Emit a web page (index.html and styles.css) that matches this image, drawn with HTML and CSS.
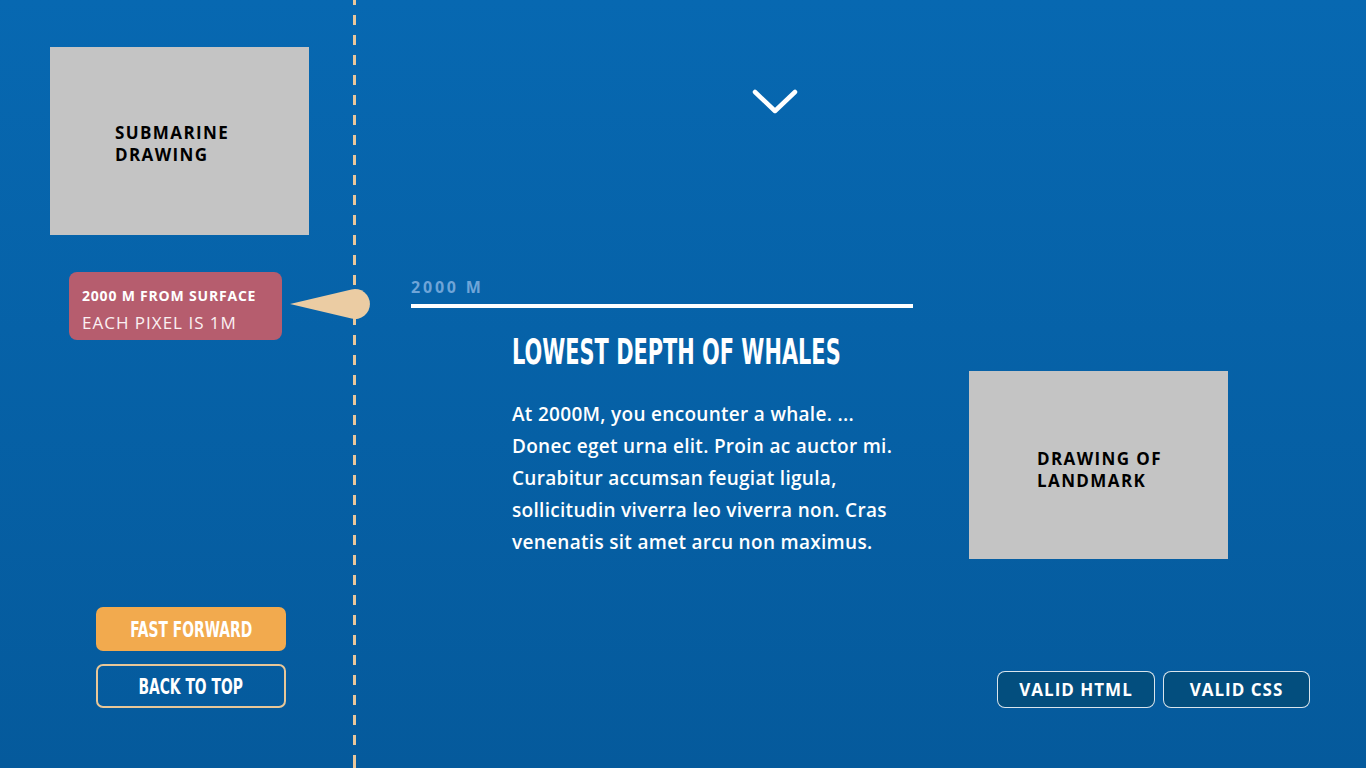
FILE: index.html
```html
<!DOCTYPE html>
<html lang="en">
<head>
<meta charset="utf-8">
<title>Depth of whales</title>
<link rel="stylesheet" href="styles.css">
</head>
<body>
  <aside class="sidebar">
    <div class="placeholder sub-box"><span>SUBMARINE<br>DRAWING</span></div>
    <div class="tooltip">
      <div class="tip-title">2000 M FROM SURFACE</div>
      <div class="tip-sub">EACH PIXEL IS 1M</div>
      <svg class="tip-pointer" viewBox="288 287 84 34" width="84" height="34" aria-hidden="true">
        <path d="M290 304 L351.5 289.4 A15 15 0 1 1 351.5 318.6 Z" fill="#ebcca3"/>
      </svg>
    </div>
    <div class="controls">
      <button class="btn btn-fast"><span class="cond">FAST FORWARD</span></button>
      <button class="btn btn-top"><span class="cond">BACK TO TOP</span></button>
    </div>
  </aside>
  <div class="rule"></div>
  <main class="main">
    <svg class="chevron" viewBox="0 0 48 28" width="48" height="28" aria-hidden="true">
      <path d="M4 4 L24 23 L44 4" fill="none" stroke="#ffffff" stroke-width="4.5" stroke-linecap="round" stroke-linejoin="round"/>
    </svg>
    <section class="depth">
      <div class="depth-label">2000 M</div>
      <div class="depth-line"></div>
      <div class="depth-row">
        <div class="depth-text">
          <h1 class="depth-title"><span class="cond">LOWEST DEPTH OF WHALES</span></h1>
          <p class="depth-body">At 2000M, you encounter a whale. ... Donec eget urna elit. Proin ac auctor mi. Curabitur accumsan feugiat ligula, sollicitudin viverra leo viverra non. Cras venenatis sit amet arcu non maximus.</p>
        </div>
        <div class="placeholder landmark-box"><span>DRAWING OF<br>LANDMARK</span></div>
      </div>
    </section>
    <footer class="validators">
      <a class="valid valid-html" href="#">VALID HTML</a>
      <a class="valid valid-css" href="#">VALID CSS</a>
    </footer>
  </main>
</body>
</html>
```
FILE: styles.css
```css
* { box-sizing: border-box; }

html, body {
  margin: 0;
  height: 768px;
}

body {
  display: flex;
  overflow: hidden;
  background: linear-gradient(to bottom, #0768b1 0%, #055a9c 100%);
  font-family: "Open Sans", "Lato", "Liberation Sans", sans-serif;
  color: #ffffff;
}

.cond {
  display: inline-block;
  font-family: "DejaVu Sans Condensed", "Liberation Sans", sans-serif;
  font-weight: 700;
  white-space: nowrap;
}

/* ---------- sidebar ---------- */
.sidebar {
  width: 353px;
  flex: none;
  display: flex;
  flex-direction: column;
  padding: 47px 0 60px 50px;
  position: relative;
  z-index: 2;
}

.placeholder {
  background: #c4c4c4;
  color: #000000;
  font-weight: 700;
  font-size: 17px;
  letter-spacing: 1.4px;
  line-height: 22px;
  display: flex;
  align-items: center;
}

.sub-box {
  width: 259px;
  height: 188px;
  padding: 6px 0 0 65px;
}

.tooltip {
  position: relative;
  margin: 37px 0 0 19px;
  width: 213px;
  height: 68px;
  background: #b65d6e;
  border-radius: 8px;
  padding: 15px 13px 0;
}

.tip-title {
  font-size: 14px;
  font-weight: 700;
  letter-spacing: 0.8px;
  line-height: 17px;
}

.tip-sub {
  margin-top: 8px;
  font-size: 17px;
  font-weight: 400;
  letter-spacing: 1px;
  line-height: 21px;
  color: #fbf0f2;
}

.tip-pointer {
  position: absolute;
  left: 219px;
  top: 15px;
}

.controls {
  margin: auto 0 0 46px;
  display: flex;
  flex-direction: column;
  gap: 13px;
}

.btn {
  width: 190px;
  height: 44px;
  border-radius: 7px;
  font-size: 22px;
  color: #ffffff;
  display: flex;
  align-items: center;
  justify-content: center;
  padding: 0;
  cursor: pointer;
}

.btn .cond {
  transform: scaleX(0.7);
  transform-origin: center;
}

.btn-fast {
  background: #f2aa4e;
  border: none;
}

.btn-top {
  background: transparent;
  border: 2px solid #e8c798;
}

/* ---------- dashed rule ---------- */
.rule {
  width: 3px;
  flex: none;
  background: repeating-linear-gradient(to bottom, #e9c79b 0 10px, transparent 10px 20px);
  background-position: 0 -5px;
}

/* ---------- main ---------- */
.main {
  flex: 1;
  display: flex;
  flex-direction: column;
}

.chevron {
  margin: 88px 0 0 395px;
  display: block;
}

.depth {
  margin: 162px 0 0 55px;
}

.depth-label {
  font-size: 16px;
  font-weight: 700;
  letter-spacing: 2.8px;
  line-height: 18px;
  color: #6fa5d8;
}

.depth-line {
  margin-top: 8px;
  width: 502px;
  height: 4px;
  background: #ffffff;
}

.depth-row {
  display: flex;
  margin-top: 21px;
}

.depth-text {
  width: 395px;
  margin-left: 101px;
}

.depth-title {
  margin: 0;
  font-size: 36px;
  line-height: 43px;
  font-weight: 700;
}

.depth-title .cond {
  transform: scaleX(0.645);
  transform-origin: left center;
}

.depth-body {
  margin: 25px 0 0;
  font-size: 19px;
  line-height: 32px;
  font-weight: 600;
  letter-spacing: 0.3px;
}

.landmark-box {
  margin: 42px 0 0 62px;
  width: 259px;
  height: 188px;
  padding: 10px 0 0 68px;
}

.validators {
  margin-top: auto;
  align-self: flex-end;
  display: flex;
  gap: 8px;
  padding: 0 56px 60px 0;
}

.valid {
  height: 37px;
  display: flex;
  align-items: center;
  justify-content: center;
  background: #034e7e;
  border: 1px solid rgba(255, 255, 255, 0.85);
  border-radius: 8px;
  color: #ffffff;
  text-decoration: none;
  font-size: 17px;
  font-weight: 700;
  letter-spacing: 1px;
}

.valid-html { width: 158px; }
.valid-css { width: 147px; }
```
